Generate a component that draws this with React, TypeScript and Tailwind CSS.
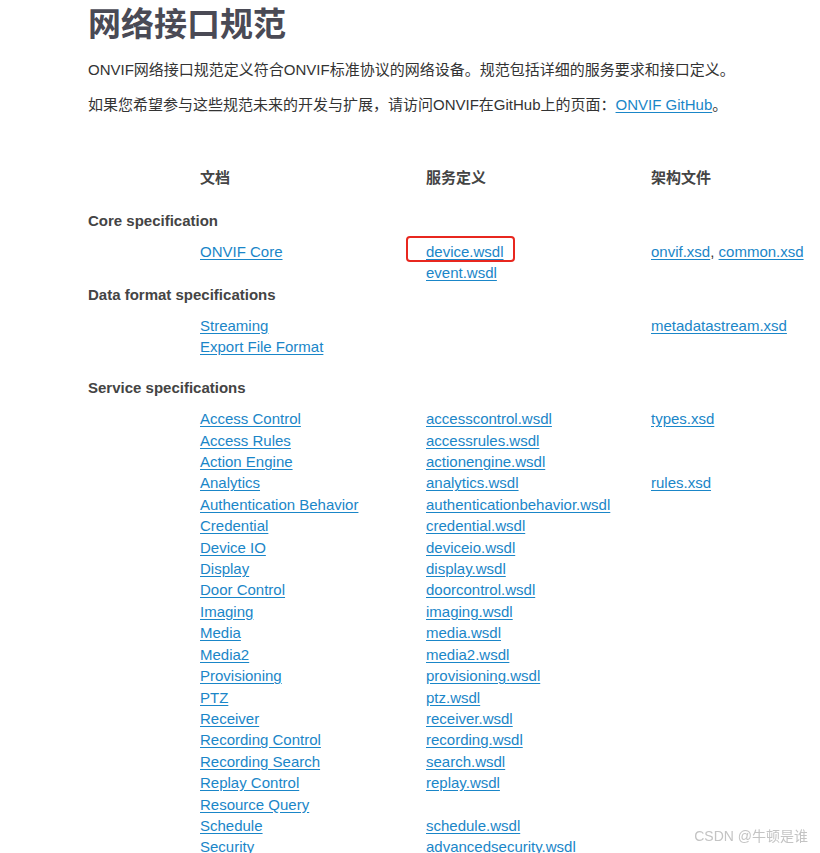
import React from 'react'

interface SpecRow {
  doc: string
  wsdl?: string[]
  xsd?: string[]
}

interface Section {
  title: string
  rows: SpecRow[]
  extraTop?: boolean
}

const sections: Section[] = [
  {
    title: 'Core specification',
    rows: [
      { doc: 'ONVIF Core', wsdl: ['device.wsdl'], xsd: ['onvif.xsd', 'common.xsd'] },
      { doc: '', wsdl: ['event.wsdl'] },
    ],
  },
  {
    title: 'Data format specifications',
    rows: [
      { doc: 'Streaming', xsd: ['metadatastream.xsd'] },
      { doc: 'Export File Format' },
    ],
  },
  {
    title: 'Service specifications',
    extraTop: true,
    rows: [
      { doc: 'Access Control', wsdl: ['accesscontrol.wsdl'], xsd: ['types.xsd'] },
      { doc: 'Access Rules', wsdl: ['accessrules.wsdl'] },
      { doc: 'Action Engine', wsdl: ['actionengine.wsdl'] },
      { doc: 'Analytics', wsdl: ['analytics.wsdl'], xsd: ['rules.xsd'] },
      { doc: 'Authentication Behavior', wsdl: ['authenticationbehavior.wsdl'] },
      { doc: 'Credential', wsdl: ['credential.wsdl'] },
      { doc: 'Device IO', wsdl: ['deviceio.wsdl'] },
      { doc: 'Display', wsdl: ['display.wsdl'] },
      { doc: 'Door Control', wsdl: ['doorcontrol.wsdl'] },
      { doc: 'Imaging', wsdl: ['imaging.wsdl'] },
      { doc: 'Media', wsdl: ['media.wsdl'] },
      { doc: 'Media2', wsdl: ['media2.wsdl'] },
      { doc: 'Provisioning', wsdl: ['provisioning.wsdl'] },
      { doc: 'PTZ', wsdl: ['ptz.wsdl'] },
      { doc: 'Receiver', wsdl: ['receiver.wsdl'] },
      { doc: 'Recording Control', wsdl: ['recording.wsdl'] },
      { doc: 'Recording Search', wsdl: ['search.wsdl'] },
      { doc: 'Replay Control', wsdl: ['replay.wsdl'] },
      { doc: 'Resource Query' },
      { doc: 'Schedule', wsdl: ['schedule.wsdl'] },
      { doc: 'Security', wsdl: ['advancedsecurity.wsdl'] },
      { doc: 'Thermal', wsdl: ['thermal.wsdl'] },
      { doc: 'Uplink', wsdl: ['uplink.wsdl'] },
    ],
  },
]

function Link({ children }: { children: React.ReactNode }) {
  return (
    <a href="#" className="text-[#1a86c8] underline underline-offset-[2px]">
      {children}
    </a>
  )
}

function LinkList({ items }: { items?: string[] }) {
  if (!items) return null
  return (
    <>
      {items.map((item, i) => (
        <React.Fragment key={item}>
          {i > 0 && <span className="text-[#333]">, </span>}
          {item === 'device.wsdl' ? (
            <span className="relative">
              <Link>{item}</Link>
              {/* red highlight box from the screenshot annotation */}
              <span className="pointer-events-none absolute left-[-20px] top-[-7px] h-[26px] w-[109px] rounded-[4px] border-2 border-[#e8271f]" />
            </span>
          ) : (
            <Link>{item}</Link>
          )}
        </React.Fragment>
      ))}
    </>
  )
}

export default function App() {
  return (
    <div
      className="relative min-h-[853px] bg-white pl-[88px] text-[15px] text-[#333]"
      style={{ fontFamily: '"Liberation Sans", Arial, "Noto Sans CJK SC", sans-serif' }}
    >
      <h1 className="pt-[3px] text-[33px] font-bold leading-[43px] text-[#4a4a55]">网络接口规范</h1>
      <p className="mt-[12px] leading-[24px]">
        ONVIF网络接口规范定义符合ONVIF标准协议的网络设备。规范包括详细的服务要求和接口定义。
      </p>
      <p className="mt-[11px] leading-[24px]">
        如果您希望参与这些规范未来的开发与扩展，请访问ONVIF在GitHub上的页面：<Link>ONVIF GitHub</Link>。
      </p>

      {/* table header */}
      <div className="mt-[50px] grid grid-cols-[112px_226px_225px_1fr] font-bold leading-[21.4px] text-[#444]">
        <div />
        <div>文档</div>
        <div>服务定义</div>
        <div>架构文件</div>
      </div>

      {sections.map((section) => (
        <div key={section.title} className={section.extraTop ? 'mt-[19.6px]' : ''}>
          <div
            className={`font-bold leading-[21.4px] text-[#444] ${section.title === 'Core specification' ? 'mt-[21.6px]' : ''}`}
          >
            {section.title}
          </div>
          <div className="mt-[9.6px]">
            {section.rows.map((row, i) => (
              <div key={i} className="grid grid-cols-[112px_226px_225px_1fr] whitespace-nowrap leading-[21.4px]">
                <div />
                <div>{row.doc && <Link>{row.doc}</Link>}</div>
                <div>
                  <LinkList items={row.wsdl} />
                </div>
                <div>
                  <LinkList items={row.xsd} />
                </div>
              </div>
            ))}
          </div>
        </div>
      ))}

      {/* CSDN watermark */}
      <div
        className="pointer-events-none fixed right-[12px] top-[826px] text-[14px] text-[#c4c4c4]"
        style={{ fontFamily: '"Liberation Sans", "Noto Sans CJK SC", sans-serif' }}
      >
        CSDN @牛顿是谁
      </div>
    </div>
  )
}
